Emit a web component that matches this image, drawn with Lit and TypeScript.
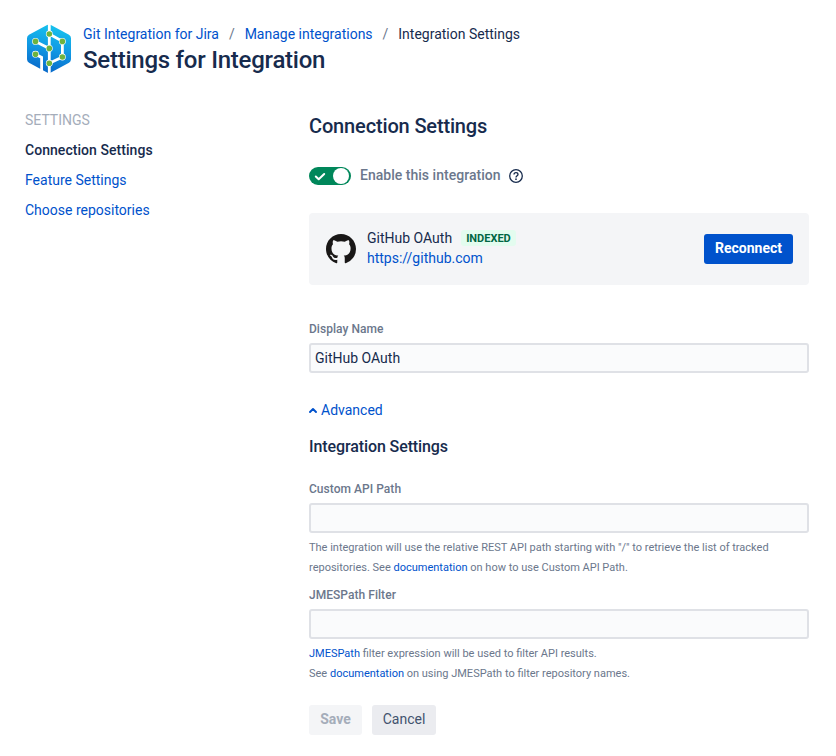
import { LitElement, html, css, svg } from "lit";
import { customElement } from "lit/decorators.js";

const nodes = [
  [24.3, 10], [10.5, 17.4], [37.4, 17.4], [24.3, 24.4], [10.5, 30.2], [37.4, 33], [24.3, 39.2],
];

@customElement("app-root")
export class AppRoot extends LitElement {
  static styles = css`
    :host { display: block; box-sizing: border-box; height: 756px; overflow: hidden; background: #fff; color: #172b4d;
      font: 400 14px/20px Roboto, "Liberation Sans", sans-serif; padding: 24px 27px 0 25px; }
    * { box-sizing: border-box; }
    a { color: #0052cc; text-decoration: none; }
    svg { display: block; flex: none; }
    header { display: flex; height: 50px; }
    .titles { margin-left: 9px; }
    .crumbs { display: flex; white-space: nowrap; }
    .sep { color: #6b778c; width: 25.7px; text-align: center; }
    h1, h2, h3 { margin: 0; font-weight: 500; }
    h1 { font-size: 24px; line-height: 28px; margin-top: 2px; letter-spacing: -0.24px; }
    .body { display: flex; margin-top: 31px; }
    nav { width: 284px; flex: none; display: flex; flex-direction: column; line-height: 30px; }
    .caption { color: #a5adba; }
    .current { font-weight: 500; color: #172b4d; letter-spacing: 0.05px; }
    main { width: 500px; padding-top: 9px; }
    h2 { font-size: 20px; line-height: 24px; letter-spacing: -0.15px; }
    .enable { display: flex; align-items: center; height: 20px; margin-top: 28px; font-weight: 500; color: #6b778c; }
    .enable span { margin: -2px 8px 0 9px; letter-spacing: 0.02px; }
    .card { display: flex; align-items: center; height: 72px; margin-top: 27px; padding: 0 16px 0 17px; border-radius: 4px; background: #f4f5f7; }
    .account { margin-left: 11px; margin-top: -2px; flex: 1; }
    .name { display: flex; align-items: center; height: 20px; }
    .badge { font-size: 11px; line-height: 16px; font-weight: 700; color: #006644; background: #e3fcef; border-radius: 3px; padding: 1px 5px 0; height: 16px; margin-left: 9px; }
    button { border: 0; border-radius: 3px; height: 30px; padding: 0 0 2px; font: inherit; display: block; }
    .primary { width: 89px; background: #0052cc; color: #fff; font-weight: 700; }
    label { display: block; font-size: 12px; line-height: 16px; font-weight: 500; color: #6b778c; margin-bottom: 6px; letter-spacing: 0.04px; }
    input { display: block; width: 500px; height: 30px; border: 2px solid #dfe1e6; border-radius: 3px; background: #fafbfc; color: #172b4d; font: inherit; padding: 0 4px; outline: 0; }
    .display { margin-top: 36px; }
    .advanced { display: flex; align-items: center; margin-top: 27px; gap: 4px; }
    h3 { font-size: 16px; line-height: 20px; margin-top: 17px; letter-spacing: -0.1px; }
    .api { margin-top: 24px; }
    .filter { margin-top: 9px; }
    .help { font-size: 11px; line-height: 20px; color: #6b778c; margin-top: 5px; white-space: nowrap; }
    .actions { display: flex; gap: 10px; margin-top: 21px; }
    .save { width: 53px; background: #f4f5f7; color: #a5adba; font-weight: 700; }
    .cancel { width: 64px; background: #ebecf0; color: #42526e; }
  `;

  private logo() {
    return svg`<svg width="49" height="50" viewBox="0 0 49 50">
      <defs>
        <linearGradient id="hex" x1="0.65" y1="0" x2="0.45" y2="1">
          <stop offset="0" stop-color="#16c4ee"/><stop offset="0.5" stop-color="#1199e4"/><stop offset="1" stop-color="#0868c9"/>
        </linearGradient>
      </defs>
      <path d="M22.1.9Q24 .1 25.9.9L44 10.7Q46 12 46 14.2V35.3Q46 37.5 44 38.7L25.9 48.5Q24 49.6 22.1 48.5L4 38.7Q2 37.5 2 35.3V14.2Q2 12 4 10.7Z" fill="url(#hex)"/>
      <path d="M24.3-1V10M24.3 24.4V51M24.3 10V24.4M10.5 17.4L24.3 24.4M24.3 10L37.4 17.4V33L24.3 39.2M10.5 30.2L16.6 33.4V47" fill="none" stroke="#fff" stroke-width="2.8"/>
      ${nodes.map(([x, y]) => svg`<circle cx=${x} cy=${y} r="3.4" fill="#fff"/><circle cx=${x} cy=${y} r="2.8" fill="#6db33f"/>`)}
    </svg>`;
  }

  render() {
    return html`
      <header>
        ${this.logo()}
        <div class="titles">
          <div class="crumbs">
            <a>Git Integration for Jira</a><span class="sep">/</span>
            <a>Manage integrations</a><span class="sep">/</span>
            <span>Integration Settings</span>
          </div>
          <h1>Settings for Integration</h1>
        </div>
      </header>
      <div class="body">
        <nav>
          <span class="caption">SETTINGS</span>
          <a class="current">Connection Settings</a>
          <a>Feature Settings</a>
          <a>Choose repositories</a>
        </nav>
        <main>
          <h2>Connection Settings</h2>
          <div class="enable">
            <svg width="42" height="18" viewBox="0 0 42 18">
              <rect width="42" height="18" rx="9" fill="#00875a"/>
              <circle cx="32" cy="9" r="8" fill="#fff"/>
              <path d="M6.8 9.5L9.7 12.3L15.2 7" fill="none" stroke="#fff" stroke-width="2" stroke-linecap="round" stroke-linejoin="round"/>
            </svg>
            <span>Enable this integration</span>
            <svg width="14" height="14" viewBox="0 0 14 14">
              <circle cx="7" cy="7" r="6.3" fill="none" stroke="#172b4d" stroke-width="1.3"/>
              <path d="M5 5.5C5 4.3 5.9 3.6 7 3.6S9 4.3 9 5.4C9 6.7 7 6.8 7 8.5" fill="none" stroke="#172b4d" stroke-width="1.3"/>
              <circle cx="7" cy="10.2" r=".85" fill="#172b4d"/>
            </svg>
          </div>
          <div class="card">
            <svg width="30" height="30" viewBox="0 0 16 16">
              <path fill="#191717" d="M8 0C3.58 0 0 3.58 0 8c0 3.54 2.29 6.53 5.47 7.59.4.07.55-.17.55-.38 0-.19-.01-.82-.01-1.49-2.01.37-2.53-.49-2.69-.94-.09-.23-.48-.94-.82-1.13-.28-.15-.68-.52-.01-.53.63-.01 1.08.58 1.23.82.72 1.21 1.87.87 2.33.66.07-.52.28-.87.51-1.07-1.78-.2-3.64-.89-3.64-3.95 0-.87.31-1.59.82-2.15-.08-.2-.36-1.02.08-2.12 0 0 .67-.21 2.2.82.64-.18 1.32-.27 2-.27s1.36.09 2 .27c1.53-1.04 2.2-.82 2.2-.82.44 1.1.16 1.92.08 2.12.51.56.82 1.27.82 2.15 0 3.07-1.87 3.75-3.65 3.95.29.25.54.73.54 1.48 0 1.07-.01 1.93-.01 2.2 0 .21.15.46.55.38A8.01 8.01 0 0 0 16 8c0-4.42-3.58-8-8-8Z"/>
            </svg>
            <div class="account">
              <div class="name">GitHub OAuth<span class="badge">INDEXED</span></div>
              <a>https://github.com</a>
            </div>
            <button class="primary">Reconnect</button>
          </div>
          <label class="display" for="name">Display Name</label>
          <input id="name" .value=${"GitHub OAuth"}>
          <a class="advanced">
            <svg width="8" height="6" viewBox="0 0 8 6"><path d="M1 5L4 2L7 5" fill="none" stroke="#0052cc" stroke-width="1.9" stroke-linecap="round" stroke-linejoin="round"/></svg>
            <span>Advanced</span>
          </a>
          <h3>Integration Settings</h3>
          <label class="api" for="api">Custom API Path</label>
          <input id="api">
          <div class="help">
            The integration will use the relative REST API path starting with "/" to retrieve the list of tracked<br>
            repositories. See <a>documentation</a> on how to use Custom API Path.
          </div>
          <label class="filter" for="filter">JMESPath Filter</label>
          <input id="filter">
          <div class="help">
            <a>JMESPath</a> filter expression will be used to filter API results.<br>
            See <a>documentation</a> on using JMESPath to filter repository names.
          </div>
          <div class="actions">
            <button class="save">Save</button>
            <button class="cancel">Cancel</button>
          </div>
        </main>
      </div>`;
  }
}
